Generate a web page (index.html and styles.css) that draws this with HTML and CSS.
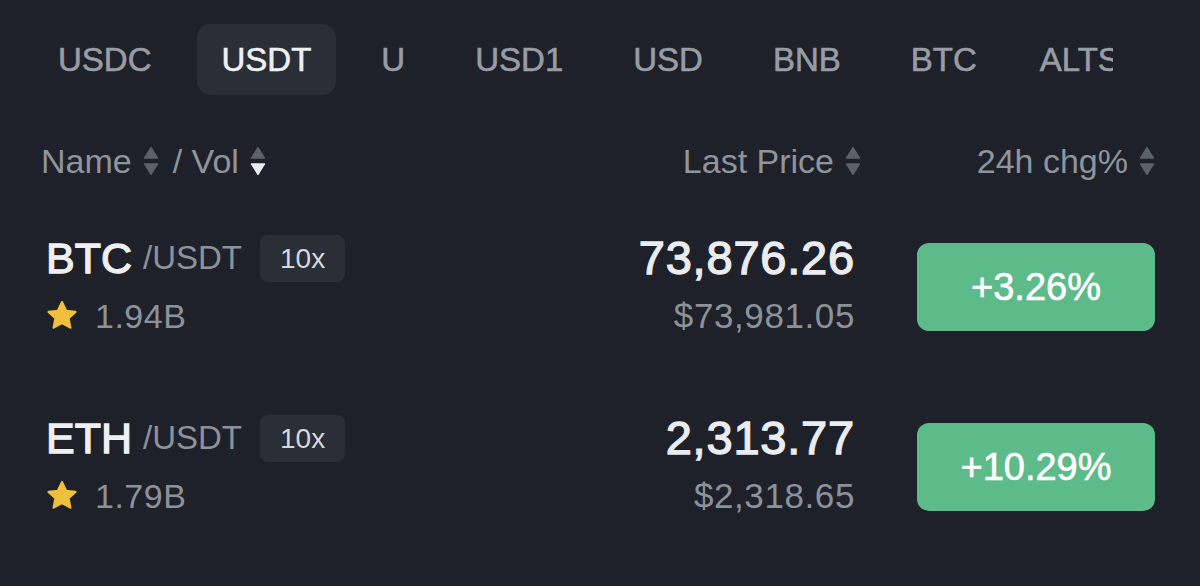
FILE: index.html
```html
<!DOCTYPE html>
<html lang="en">
<head>
    <meta charset="UTF-8">
    <meta name="viewport" content="width=device-width, initial-scale=1.0">
    <title>Markets</title>
    <link rel="stylesheet" href="styles.css">
</head>
<body>
    <!-- Quote asset tabs -->
    <nav class="tabs">
        <span class="tab">USDC</span>
        <span class="tab active">USDT</span>
        <span class="tab">U</span>
        <span class="tab">USD1</span>
        <span class="tab">USD</span>
        <span class="tab">BNB</span>
        <span class="tab">BTC</span>
        <span class="tab">ALTS</span>
    </nav>

    <!-- Column headers -->
    <div class="market-head">
        <div class="col-name">
            Name
            <svg class="sort" viewBox="0 0 16 30"><path class="up" d="M8 1.5 L14.5 12 H1.5 Z"/><path class="down" d="M1.5 18 H14.5 L8 28.5 Z"/></svg>
            <span class="sep">/ Vol</span>
            <svg class="sort" viewBox="0 0 16 30"><path class="up" d="M8 1.5 L14.5 12 H1.5 Z"/><path class="down on" d="M1.5 18 H14.5 L8 28.5 Z"/></svg>
        </div>
        <div class="col-price">
            Last Price
            <svg class="sort" viewBox="0 0 16 30"><path class="up" d="M8 1.5 L14.5 12 H1.5 Z"/><path class="down" d="M1.5 18 H14.5 L8 28.5 Z"/></svg>
        </div>
        <div class="col-chg">
            24h chg%
            <svg class="sort" viewBox="0 0 16 30"><path class="up" d="M8 1.5 L14.5 12 H1.5 Z"/><path class="down" d="M1.5 18 H14.5 L8 28.5 Z"/></svg>
        </div>
    </div>

    <!-- Market rows -->
    <div class="market-row">
        <div class="pair">
            <div class="pair-top">
                <span class="base">BTC</span>
                <span class="quote">/USDT</span>
                <span class="lev">10x</span>
            </div>
            <div class="pair-bottom">
                <svg class="star" viewBox="0 0 24 24"><path d="M12 2.2 L14.9 8.3 L21.5 9.1 L16.6 13.6 L17.9 20.2 L12 16.9 L6.1 20.2 L7.4 13.6 L2.5 9.1 L9.1 8.3 Z"/></svg>
                <span class="vol">1.94B</span>
            </div>
        </div>
        <div class="price">
            <div class="last">73,876.26</div>
            <div class="fiat">$73,981.05</div>
        </div>
        <div class="chg-cell">
            <span class="chg up">+3.26%</span>
        </div>
    </div>

    <div class="market-row">
        <div class="pair">
            <div class="pair-top">
                <span class="base">ETH</span>
                <span class="quote">/USDT</span>
                <span class="lev">10x</span>
            </div>
            <div class="pair-bottom">
                <svg class="star" viewBox="0 0 24 24"><path d="M12 2.2 L14.9 8.3 L21.5 9.1 L16.6 13.6 L17.9 20.2 L12 16.9 L6.1 20.2 L7.4 13.6 L2.5 9.1 L9.1 8.3 Z"/></svg>
                <span class="vol">1.79B</span>
            </div>
        </div>
        <div class="price">
            <div class="last">2,313.77</div>
            <div class="fiat">$2,318.65</div>
        </div>
        <div class="chg-cell">
            <span class="chg up">+10.29%</span>
        </div>
    </div>
</body>
</html>
```

FILE: styles.css
```css
/* Reset */
* {
    margin: 0;
    padding: 0;
    box-sizing: border-box;
}
body {
    font-family: 'Liberation Sans', Arial, sans-serif;
    background-color: #1e2129;
    color: #eaecef;
    overflow: hidden;
}

.tabs {
    display: flex;
    gap: 20px;
    width: 1113px;
    padding: 24px 0 0 33px;
    overflow: hidden;
}
.tab {
    flex-shrink: 0;
    height: 71px;
    line-height: 71px;
    padding: 0 25px;
    font-size: 33px;
    color: #979ca5;
    border-radius: 14px;
    -webkit-text-stroke: 0.6px currentColor;
}
.tab:last-child {
    margin-left: -7px;
}
.tab.active {
    background-color: #2a2e37;
    color: #eef0f2;
}

/* Header + rows share the same grid */
.market-head, .market-row {
    display: grid;
    grid-template-columns: 1fr 300px 238px;
    column-gap: 56px;
    padding: 0 45px 0 41px;
    align-items: center;
}

.market-head {
    height: 72px;
    margin-top: 30px;
    font-size: 34px;
    color: #8f949d;
}
.market-head > div {
    display: flex;
    align-items: center;
    gap: 11px;
}
.col-name .sep {
    margin-left: 3px;
}
.col-price, .col-chg {
    justify-content: flex-end;
}
.sort {
    width: 16px;
    height: 30px;
}
.sort path {
    fill: #5b616b;
    stroke: #5b616b;
    stroke-width: 1.4;
    stroke-linejoin: round;
}
.sort path.on {
    fill: #eaecef;
    stroke: #eaecef;
}

/* Rows */
.market-row {
    height: 180px;
    padding-left: 46px;
}
.pair-top, .pair-bottom {
    display: flex;
    align-items: center;
    height: 58px;
}
.base {
    font-size: 43px;
    color: #eef0f2;
    -webkit-text-stroke: 1.3px currentColor;
}
.quote {
    margin-left: 11px;
    font-size: 33px;
    color: #8d929a;
}
.lev {
    margin-left: 18px;
    height: 47px;
    line-height: 47px;
    padding: 0 20px;
    font-size: 28px;
    color: #d5d8dc;
    background-color: #2a2e37;
    border-radius: 8px;
}
.star {
    width: 34px;
    height: 34px;
    margin-left: -1px;
}
.star path {
    fill: #f0bf3c;
    stroke: #f0bf3c;
    stroke-width: 1.6;
    stroke-linejoin: round;
}
.vol {
    margin-left: 16px;
    font-size: 34px;
    letter-spacing: 0.5px;
    color: #8d929a;
}

.price {
    text-align: right;
    padding-right: 6px;
}
.last {
    height: 58px;
    line-height: 58px;
    font-size: 47px;
    letter-spacing: 0.8px;
    -webkit-text-stroke: 1.3px currentColor;
}
.fiat {
    height: 58px;
    line-height: 58px;
    font-size: 35px;
    letter-spacing: 0.6px;
    color: #8d929a;
}

.chg {
    display: block;
    height: 88px;
    line-height: 88px;
    text-align: center;
    font-size: 38px;
    color: #fff;
    border-radius: 12px;
    -webkit-text-stroke: 0.6px currentColor;
}
.chg.up {
    background-color: #5dbb89;
}
```
